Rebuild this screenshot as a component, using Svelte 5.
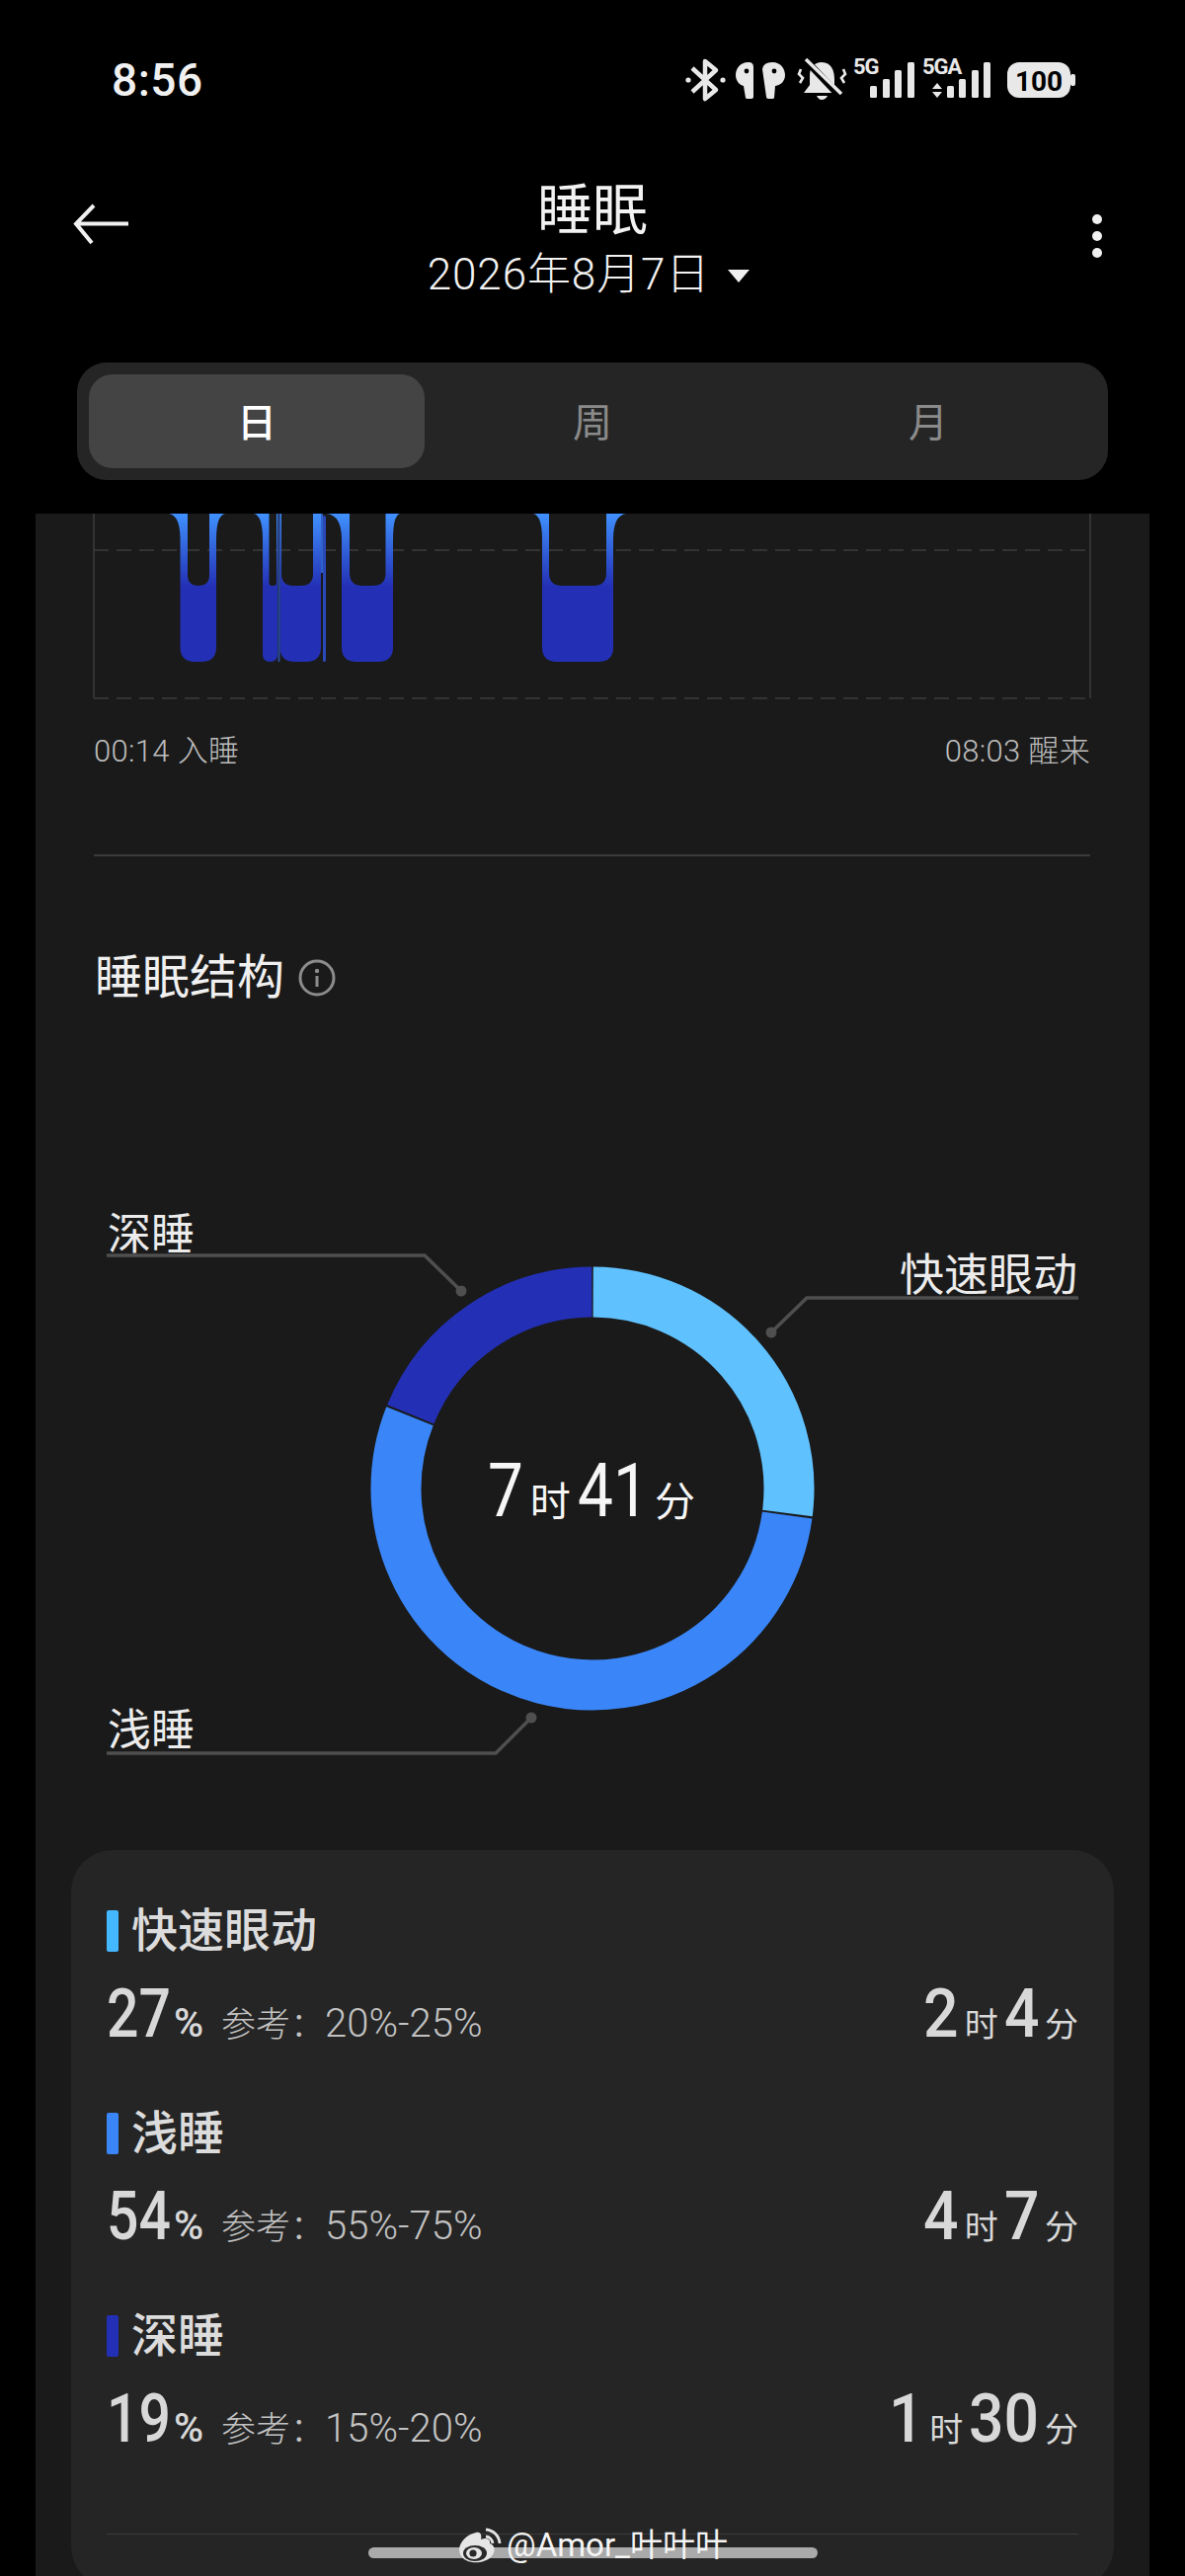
<script>
  const bars = [
    { x0: 182.5, x1: 219, in0: 190, in1: 212, fl: 171, fr: 228, ir: 11 },
    { x0: 266, x1: 281, in0: 272.5, in1: 280, fl: 257, fr: 281, ir: 3 },
    { x0: 283.5, x1: 325, in0: 285, in1: 317, fl: 283.5, fr: 325, ir: 12 },
    { x0: 346, x1: 398, in0: 354, in1: 390.5, fl: 331, fr: 405, ir: 13 },
    { x0: 549, x1: 621, in0: 556, in1: 614, fl: 540, fr: 634, ir: 13 }
  ];

  function barPath(b) {
    const r = Math.min(15, (b.x1 - b.x0) / 2);
    return `M${b.fl} 520 Q${b.x0} 522 ${b.x0} 546 L${b.x0} ${670 - r} Q${b.x0} 670 ${b.x0 + r} 670 L${b.x1 - r} 670 Q${b.x1} 670 ${b.x1} ${670 - r} L${b.x1} 546 Q${b.x1} 522 ${b.fr} 520 L${b.in1} 520 L${b.in1} ${593 - b.ir} Q${b.in1} 593 ${b.in1 - b.ir} 593 L${b.in0 + b.ir} 593 Q${b.in0} 593 ${b.in0} ${593 - b.ir} L${b.in0} 520 Z`;
  }

  const CX = 225, CY = 225, R = 199;
  function arc(from, to) {
    const a = ((from - 90) * Math.PI) / 180;
    const b = ((to - 90) * Math.PI) / 180;
    const large = to - from > 180 ? 1 : 0;
    return `M${CX + R * Math.cos(a)} ${CY + R * Math.sin(a)} A${R} ${R} 0 ${large} 1 ${CX + R * Math.cos(b)} ${CY + R * Math.sin(b)}`;
  }

  const segments = [
    { color: '#60c1ff', from: 0.2, to: 97.2 },
    { color: '#3a86f8', from: 97.8, to: 291.6 },
    { color: '#2330b5', from: 292.2, to: 359.8 }
  ];

  const stages = [
    { name: '快速眼动', color: '#44b8ff', pct: '27', ref: '20%-25%', h: '2', m: '4' },
    { name: '浅睡', color: '#3a86f8', pct: '54', ref: '55%-75%', h: '4', m: '7' },
    { name: '深睡', color: '#2330b5', pct: '19', ref: '15%-20%', h: '1', m: '30' }
  ];
</script>

<div class="screen">
  <div class="status">
    <span class="time">8:56</span>
    <svg class="status-icons" width="400" height="60" viewBox="690 48 400 60">
      <g fill="none" stroke="#e8e8e8" stroke-width="4.5" stroke-linejoin="round">
        <path d="M701 69 L725 91 L714 100 L714 62 L725 71 L701 93" />
      </g>
      <circle cx="697" cy="81" r="2.6" fill="#e8e8e8" />
      <circle cx="732" cy="81" r="2.6" fill="#e8e8e8" />

      <path d="M758 63 C749 63 745 70 745 76 C745 82 749 86 753 87 L755 99 Q755 100 757 100 L761 100 Q763 100 763 98 L763 68 Q763 63 758 63 Z" fill="#e8e8e8" />
      <path d="M782 63 C791 63 795 70 795 76 C795 82 791 86 785 87 L784 99 Q784 100 782 100 L778 100 Q776 100 776 98 L772 70 Q773 63 782 63 Z" fill="#e8e8e8" />
      <circle cx="756" cy="72" r="2.4" fill="#000" />
      <circle cx="784" cy="72" r="2.4" fill="#000" />

      <path d="M832 63 C842 63 845 72 845 80 L845 86 L851 94 L814 94 L820 86 L820 76 C820 68 825 63 832 63 Z" fill="#e8e8e8" />
      <path d="M827 97 L838 97 Q836 101 832 101 Q829 101 827 97 Z" fill="#e8e8e8" />
      <path d="M816 61 L852 99" stroke="#000" stroke-width="7" />
      <path d="M816 60 L852 95" stroke="#e8e8e8" stroke-width="3.5" />
      <path d="M811 70 L809 75 L813 79 L810 84 M854 70 L856 75 L852 79 L855 84" fill="none" stroke="#e8e8e8" stroke-width="2.6" />

      <text class="net" x="864" y="75">5G</text>
      <rect x="881" y="87" width="7" height="12" rx="1.5" fill="#e8e8e8" />
      <rect x="894" y="80" width="7" height="19" rx="1.5" fill="#e8e8e8" />
      <rect x="906" y="71" width="7" height="28" rx="1.5" fill="#e8e8e8" />
      <rect x="919" y="63" width="7" height="36" rx="1.5" fill="#e8e8e8" />

      <text class="net" x="934" y="75">5GA</text>
      <path d="M949 84 L954 90 L944 90 Z M944 93 L954 93 L949 99 Z" fill="#e8e8e8" />
      <rect x="959" y="87" width="7" height="12" rx="1.5" fill="#e8e8e8" />
      <rect x="971" y="80" width="7" height="19" rx="1.5" fill="#e8e8e8" />
      <rect x="984" y="71" width="7" height="28" rx="1.5" fill="#e8e8e8" />
      <rect x="996" y="63" width="7" height="36" rx="1.5" fill="#e8e8e8" />

      <rect x="1020" y="63" width="64" height="36" rx="12" fill="#e8e8e8" />
      <rect x="1084" y="75" width="5" height="12" rx="2" fill="#e8e8e8" />
      <text class="batt" x="1052" y="92" text-anchor="middle">100</text>
    </svg>
  </div>

  <header class="appbar">
    <svg class="back" width="60" height="44" viewBox="0 0 60 44">
      <path d="M57 21.5 L4 21.5 M22 3 L4 21.5 L20 41" fill="none" stroke="#f0f0f0" stroke-width="4" />
    </svg>
    <div class="heading">
      <div class="title">睡眠</div>
      <div class="date">2026年8月7日<i class="caret"></i></div>
    </div>
    <div class="more"><span></span><span></span><span></span></div>
  </header>

  <nav class="tabs">
    <button class="tab selected">日</button>
    <button class="tab">周</button>
    <button class="tab">月</button>
  </nav>

  <main class="panel">
    <svg class="chart" width="1128" height="190" viewBox="36 520 1128 190">
      <defs>
        <linearGradient id="sleepfill" gradientUnits="userSpaceOnUse" x1="0" y1="522" x2="0" y2="594">
          <stop offset="0" stop-color="#3f8efc" />
          <stop offset="1" stop-color="#2330b5" />
        </linearGradient>
      </defs>
      <path d="M95 520 V707 M1104 520 V707" stroke="#3d3d3d" stroke-width="1.5" />
      <path d="M95 557 H1104 M95 707 H1104" stroke="#3d3d3d" stroke-width="1.5" stroke-dasharray="15 8" />
      {#each bars as b}
        <path d={barPath(b)} fill="url(#sleepfill)" />
      {/each}
      <rect x="281.5" y="520" width="2" height="150" fill="#2a4d9c" />
      <rect x="327" y="522" width="3" height="148" rx="1.5" fill="#2a49b8" />
      <rect x="325" y="520" width="2" height="60" fill="#2f61c9" />
    </svg>

    <div class="times">
      <span>00:14 入睡</span>
      <span>08:03 醒来</span>
    </div>
    <hr class="rule" />

    <h2 class="section">
      睡眠结构
      <svg width="38" height="38" viewBox="0 0 38 38">
        <circle cx="19" cy="19" r="17" fill="none" stroke="#8c8c8c" stroke-width="3" />
        <circle cx="19" cy="12" r="2.2" fill="#8c8c8c" />
        <rect x="17.5" y="17" width="3" height="11" fill="#8c8c8c" />
      </svg>
    </h2>

    <div class="donut-area">
      <svg class="leaders" width="1128" height="600" viewBox="36 1220 1128 600">
        <g fill="none" stroke="#4f4f4f" stroke-width="3.5">
          <path d="M108 1271 H430 L467 1307" />
          <path d="M1092 1314 H817 L781 1349" />
          <path d="M108 1775 H502 L538 1739" />
        </g>
        <circle cx="467" cy="1307" r="5.5" fill="#4f4f4f" />
        <circle cx="781" cy="1349" r="5.5" fill="#4f4f4f" />
        <circle cx="538" cy="1739" r="5.5" fill="#4f4f4f" />
      </svg>
      <span class="tag tag-deep">深睡</span>
      <span class="tag tag-rem">快速眼动</span>
      <span class="tag tag-light">浅睡</span>

      <div class="donut">
        <svg width="450" height="450" viewBox="0 0 450 450">
          {#each segments as s}
            <path d={arc(s.from, s.to)} fill="none" stroke={s.color} stroke-width="51" />
          {/each}
        </svg>
        <div class="total">
          <b class="num">7</b><small>时</small><b class="num two">41</b><small>分</small>
        </div>
      </div>
    </div>

    <section class="card">
      {#each stages as s}
        <div class="stage">
          <div class="stage-name"><i style="background:{s.color}"></i>{s.name}</div>
          <div class="stage-row">
            <div class="left">
              <b class="num two">{s.pct}</b><em>%</em>
              <span class="ref">参考：<span class="range">{s.ref}</span></span>
            </div>
            <div class="right">
              <b class="num">{s.h}</b><small>时</small><b class="num" class:two={s.m.length === 2}>{s.m}</b><small class="last">分</small>
            </div>
          </div>
        </div>
      {/each}
      <hr class="card-rule" />
    </section>
  </main>

  <div class="homebar"></div>
  <div class="watermark">
    <svg width="46" height="38" viewBox="0 0 46 38">
      <path d="M4 28 C0 18 10 8 20 6 C25 5 26 9 25 13 C30 11 35 12 34 17 C40 19 40 26 35 31 C28 38 9 39 4 28 Z" fill="#e6e6e6" />
      <ellipse cx="19" cy="27" rx="12" ry="8" fill="#2a2a2a" />
      <ellipse cx="18" cy="27" rx="8" ry="6" fill="#e6e6e6" />
      <circle cx="17" cy="27" r="3.6" fill="#2a2a2a" />
      <path d="M30 10 A8 8 0 0 1 37 17 M30 3 A15 15 0 0 1 44 17" fill="none" stroke="#e6e6e6" stroke-width="2.8" />
    </svg>
    <span>@Amor_叶叶叶</span>
  </div>
</div>

<style>
  :global(body) {
    margin: 0;
    background: #000;
  }

  .screen {
    position: relative;
    width: 1200px;
    height: 2608px;
    overflow: hidden;
    background: #000;
    color: #f2f2f2;
    font-family: Roboto, "Noto Sans CJK SC", sans-serif;
  }

  .status {
    height: 160px;
    display: flex;
    justify-content: space-between;
    padding: 58px 110px 0 113px;
    box-sizing: border-box;
  }
  .time {
    font-size: 46px;
    font-weight: 500;
    line-height: 46px;
    letter-spacing: 0.5px;
    color: #f0f0f0;
  }
  .status-icons {
    margin-top: -10px;
  }
  .net {
    font: 700 22px Roboto, sans-serif;
    letter-spacing: -1px;
    fill: #e8e8e8;
  }
  .batt {
    font: 700 28px Roboto, sans-serif;
    fill: #000;
  }

  /* digits in the reference are narrower than any installed face */
  .num {
    display: inline-block;
    width: 0.47em;
    transform: scaleX(0.84);
    transform-origin: left;
    white-space: nowrap;
  }
  .num.two {
    width: 0.94em;
  }

  .appbar {
    height: 207px;
    position: relative;
    display: flex;
    justify-content: center;
  }
  .back {
    position: absolute;
    left: 73px;
    top: 45px;
  }
  .heading {
    text-align: center;
    padding-top: 23px;
  }
  .title {
    font-size: 56px;
    line-height: 60px;
  }
  .date {
    margin: 8px 4px 0 -4px;
    font-size: 44px;
    line-height: 54px;
    font-weight: 300;
    letter-spacing: 0.9px;
    display: flex;
    align-items: center;
  }
  .caret {
    width: 0;
    height: 0;
    margin-left: 18px;
    margin-top: 2px;
    border-left: 11px solid transparent;
    border-right: 11px solid transparent;
    border-top: 13px solid #f0f0f0;
  }
  .more {
    position: absolute;
    right: 84px;
    top: 57px;
    display: flex;
    flex-direction: column;
    gap: 7px;
  }
  .more span {
    width: 10px;
    height: 10px;
    border-radius: 50%;
    background: #f0f0f0;
  }

  .tabs {
    margin: 0 78px;
    height: 119px;
    padding: 12px;
    box-sizing: border-box;
    display: grid;
    grid-template-columns: repeat(3, 1fr);
    background: #252525;
    border-radius: 30px;
  }
  .tab {
    border: none;
    background: none;
    color: #8a8a8a;
    font: 400 40px "Noto Sans CJK SC", sans-serif;
    border-radius: 24px;
    padding: 0 0 3px;
  }
  .tab.selected {
    background: #444;
    color: #fff;
    font-weight: 500;
  }

  .panel {
    margin: 34px 36px 0;
    height: 2100px;
    background: #1a1a1a;
    position: relative;
  }
  .chart {
    display: block;
  }
  .times {
    display: flex;
    justify-content: space-between;
    margin: 31px 60px 0 59px;
    font-size: 31px;
    line-height: 40px;
    font-weight: 300;
    letter-spacing: 0.3px;
    color: #bdbdbd;
  }
  .rule {
    margin: 84px 60px 0 59px;
    border: none;
    border-top: 2px solid #3a3a3a;
  }
  .section {
    margin: 93px 0 0 60px;
    display: flex;
    align-items: center;
    gap: 14px;
    font-size: 48px;
    line-height: 60px;
    font-weight: 400;
    color: #f0f0f0;
  }

  .donut-area {
    position: relative;
    height: 540px;
    margin-top: 200px;
  }
  .leaders {
    position: absolute;
    left: 0;
    top: 0;
  }
  .tag {
    position: absolute;
    font-size: 44px;
    line-height: 50px;
    color: #ececec;
  }
  .tag-deep {
    left: 73px;
    top: 5px;
  }
  .tag-rem {
    right: 73px;
    top: 47px;
    font-size: 45px;
  }
  .tag-light {
    left: 73px;
    top: 507px;
  }
  .donut {
    position: absolute;
    left: 339px;
    top: 62px;
    width: 450px;
    height: 450px;
  }
  .donut svg {
    display: block;
  }
  .total {
    position: absolute;
    inset: 0;
    display: flex;
    align-items: baseline;
    justify-content: center;
    padding: 189px 0 0 5px;
    box-sizing: border-box;
    color: #f6f6f6;
  }
  .total b {
    font-size: 76px;
    font-weight: 400;
    line-height: 76px;
  }
  .total small {
    font-size: 41px;
    margin: 0 7px 0 7px;
  }

  .card {
    position: absolute;
    left: 36px;
    right: 36px;
    top: 1353px;
    bottom: 0;
    background: #252525;
    border-radius: 42px;
    padding: 59px 36px 0;
    color: #d8d8d8;
  }
  .stage {
    height: 205px;
  }
  .stage-name {
    display: flex;
    align-items: center;
    gap: 13px;
    font-size: 47px;
    font-weight: 500;
    line-height: 46px;
    height: 46px;
    color: #dcdcdc;
  }
  .stage-name i {
    width: 12px;
    height: 42px;
    border-radius: 2px;
  }
  .stage-row {
    display: flex;
    justify-content: space-between;
    align-items: baseline;
    margin-top: 25px;
  }
  .left b,
  .right b {
    font-size: 68px;
    line-height: 72px;
    font-weight: 500;
  }
  .right .num {
    width: 0.52em;
    transform: scaleX(0.92);
  }
  .right .num.two {
    width: 1.04em;
  }
  .left em {
    font-style: normal;
    font-size: 41px;
    font-weight: 500;
    margin-left: 4px;
  }
  .ref {
    font-size: 35px;
    font-weight: 300;
    color: #c2c2c2;
    margin-left: 14px;
  }
  .range {
    font-size: 40px;
  }
  .right small {
    font-size: 34px;
    margin: 0 6px 0 6px;
  }
  .right small.last {
    margin-right: 0;
  }
  .card-rule {
    margin: 0;
    border: none;
    border-top: 1px solid #3c3c3c;
    position: relative;
    top: 18px;
  }

  .homebar {
    position: absolute;
    left: 373px;
    top: 2579px;
    width: 455px;
    height: 11px;
    border-radius: 6px;
    background: #aaa;
  }
  .watermark {
    position: absolute;
    left: 462px;
    top: 2557px;
    display: flex;
    align-items: center;
    gap: 5px;
    font-size: 33px;
    line-height: 40px;
    color: #f4f4f4;
  }
</style>
